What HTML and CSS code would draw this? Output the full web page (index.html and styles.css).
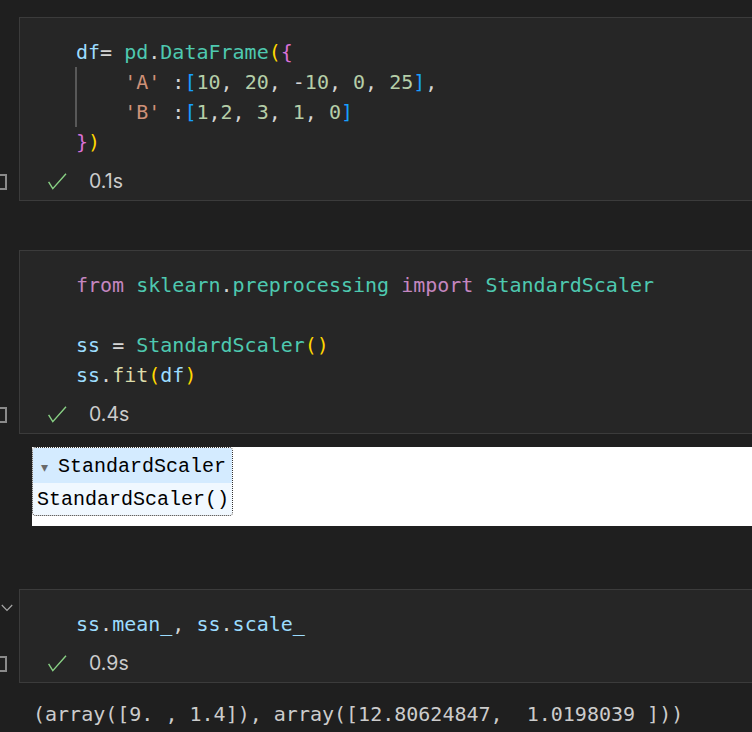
FILE: index.html
```html
<!DOCTYPE html>
<html>
<head>
<meta charset="utf-8">
<link rel="stylesheet" href="styles.css">
</head>
<body>
<div class="notebook">
  <div class="cell cell-first">
    <div class="code">
      <div class="line"><span class="var">df</span><span class="op">= </span><span class="cls">pd</span><span class="op">.</span><span class="cls">DataFrame</span><span class="b1">(</span><span class="b2">{</span></div>
      <div class="line guide">    <span class="str">'A'</span><span class="op"> :</span><span class="b3">[</span><span class="num">10</span><span class="op">, </span><span class="num">20</span><span class="op">, -</span><span class="num">10</span><span class="op">, </span><span class="num">0</span><span class="op">, </span><span class="num">25</span><span class="b3">]</span><span class="op">,</span></div>
      <div class="line guide">    <span class="str">'B'</span><span class="op"> :</span><span class="b3">[</span><span class="num">1</span><span class="op">,</span><span class="num">2</span><span class="op">, </span><span class="num">3</span><span class="op">, </span><span class="num">1</span><span class="op">, </span><span class="num">0</span><span class="b3">]</span></div>
      <div class="line"><span class="b2">}</span><span class="b1">)</span></div>
    </div>
    <div class="status">
      <span class="gutter-box"></span>
      <svg class="check" width="19" height="17" viewBox="0 0 19 17"><polyline points="0.6,8.8 4.8,15.6 18,0.8" fill="none" stroke="#89d185" stroke-width="1.4"/></svg>
      <span class="time">0.1s</span>
    </div>
  </div>

  <div class="cell cell-second">
    <div class="code">
      <div class="line"><span class="kw">from</span> <span class="cls">sklearn</span><span class="op">.</span><span class="cls">preprocessing</span> <span class="kw">import</span> <span class="cls">StandardScaler</span></div>
      <div class="line"> </div>
      <div class="line"><span class="var">ss</span><span class="op"> = </span><span class="cls">StandardScaler</span><span class="b1">()</span></div>
      <div class="line"><span class="var">ss</span><span class="op">.</span><span class="fn">fit</span><span class="b1">(</span><span class="var">df</span><span class="b1">)</span></div>
    </div>
    <div class="status">
      <span class="gutter-box"></span>
      <svg class="check" width="19" height="17" viewBox="0 0 19 17"><polyline points="0.6,8.8 4.8,15.6 18,0.8" fill="none" stroke="#89d185" stroke-width="1.4"/></svg>
      <span class="time">0.4s</span>
    </div>
  </div>

  <div class="widget">
    <div class="estimator">
      <div class="est-head"><span class="tri">▾</span><span class="est-label">StandardScaler</span></div>
      <div class="est-body">StandardScaler()</div>
    </div>
  </div>

  <div class="cell cell-third">
    <svg class="chevron" width="12" height="8" viewBox="0 0 12 8"><polyline points="0.8,1 6,6.5 11.2,1" fill="none" stroke="#a6a6a6" stroke-width="1.2"/></svg>
    <div class="code">
      <div class="line"><span class="var">ss</span><span class="op">.</span><span class="var">mean_</span><span class="op">, </span><span class="var">ss</span><span class="op">.</span><span class="var">scale_</span></div>
    </div>
    <div class="status">
      <span class="gutter-box"></span>
      <svg class="check" width="19" height="17" viewBox="0 0 19 17"><polyline points="0.6,8.8 4.8,15.6 18,0.8" fill="none" stroke="#89d185" stroke-width="1.4"/></svg>
      <span class="time">0.9s</span>
    </div>
  </div>

  <div class="output">(array([9. , 1.4]), array([12.80624847,  1.0198039 ]))</div>
</div>
</body>
</html>
```

FILE: styles.css
```css
html, body {
  margin: 0;
  padding: 0;
  background: #1f1f1f;
  overflow: hidden;
  width: 752px;
  height: 732px;
}

.notebook {
  padding-top: 17px;
}

.cell {
  position: relative;
  margin-left: 19px;
  margin-right: -30px;
  background: #262626;
  border: 1px solid #3b3b3b;
}

.cell-second {
  margin-top: 49px;
}

.cell-third {
  margin-top: 63px;
}

.code {
  padding: 19px 0 0 56px;
  font-family: "DejaVu Sans Mono", monospace;
  font-size: 20px;
  line-height: 30px;
  color: #d4d4d4;
}

.line {
  position: relative;
  height: 30px;
  white-space: pre;
}

.guide::before {
  content: "";
  position: absolute;
  left: -1px;
  top: 0;
  bottom: 0;
  width: 2px;
  background: #585858;
}

.var { color: #9cdcfe; }
.cls { color: #4ec9b0; }
.op { color: #d4d4d4; }
.kw { color: #c586c0; }
.fn { color: #dcdcaa; }
.str { color: #ce9178; }
.num { color: #b5cea8; }
.b1 { color: #ffd700; }
.b2 { color: #da70d6; }
.b3 { color: #179fff; }

.status {
  position: relative;
  display: flex;
  align-items: center;
  height: 30px;
  margin-top: 9px;
  margin-bottom: 4px;
}

.check {
  margin-left: 28px;
  display: block;
}

.time {
  margin-left: 22px;
  font-family: "Inter", "Liberation Sans", sans-serif;
  font-size: 19.5px;
  color: #cccccc;
}

.gutter-box {
  position: absolute;
  left: -29px;
  top: 8px;
  width: 12px;
  height: 12px;
  border: 2px solid #8a8a8a;
}

.chevron {
  position: absolute;
  left: -19px;
  top: 14px;
}

.widget {
  margin-top: 13px;
  margin-left: 32px;
  margin-right: -20px;
  height: 79px;
  background: #ffffff;
}

.estimator {
  width: 199px;
  border: 1px dotted #333333;
  border-radius: 4px;
  font-family: "Liberation Mono", monospace;
  font-size: 20px;
  color: #000000;
  overflow: hidden;
}

.est-head {
  display: flex;
  align-items: center;
  height: 35px;
  padding-top: 2px;
  box-sizing: border-box;
  background: #d4ebff;
}

.tri {
  font-family: "DejaVu Sans", sans-serif;
  font-size: 14px;
  color: #696969;
  margin-left: 8px;
  width: 17px;
}

.est-body {
  height: 32px;
  line-height: 34px;
  padding-left: 4px;
  background: #f0f8ff;
}

.output {
  margin-top: 16px;
  padding-left: 33px;
  font-family: "DejaVu Sans Mono", monospace;
  font-size: 20px;
  line-height: 30px;
  color: #cccccc;
  white-space: pre;
}
```
